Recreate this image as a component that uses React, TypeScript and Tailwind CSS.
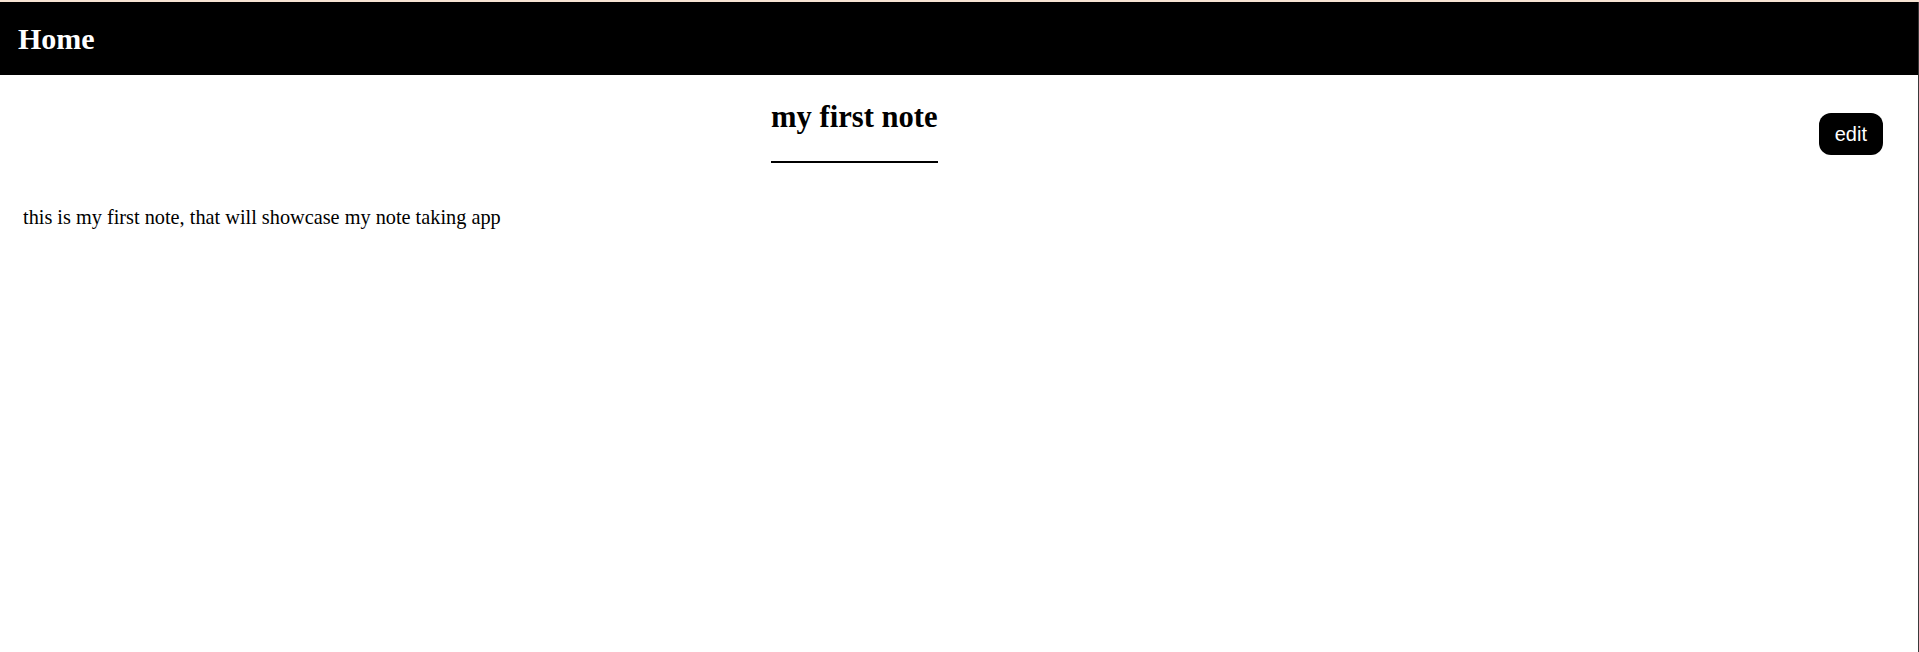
export default function App() {
  return (
    <div className="min-h-[652px] bg-white font-['Liberation_Serif',serif] text-black">
      <div className="h-[2px] bg-[#f6e3d2]"></div>
      <div className="min-h-[650px] border-r border-[#3a3a3a]">
        <header className="flex h-[73px] items-center bg-black px-[18px]">
          <h1 className="text-[30px] font-bold leading-[34px] text-white">Home</h1>
        </header>

        <div className="flex items-start">
          <div className="flex flex-1 justify-center pt-[25px]">
            <h2 className="inline-block border-b-2 border-black pb-[27px] text-[30.6px] font-bold leading-[34px]">
              my first note
            </h2>
          </div>
          <button className="ml-[110px] mr-[35px] mt-[38px] rounded-xl bg-black px-[16px] py-[9px] font-['Liberation_Sans',Arial,sans-serif] text-[20px] leading-[24px] text-white">
            edit
          </button>
        </div>

        <p className="px-[23px] pt-[43px] text-[20.3px] leading-[23px]">
          this is my first note, that will showcase my note taking app
        </p>
      </div>
    </div>
  );
}
